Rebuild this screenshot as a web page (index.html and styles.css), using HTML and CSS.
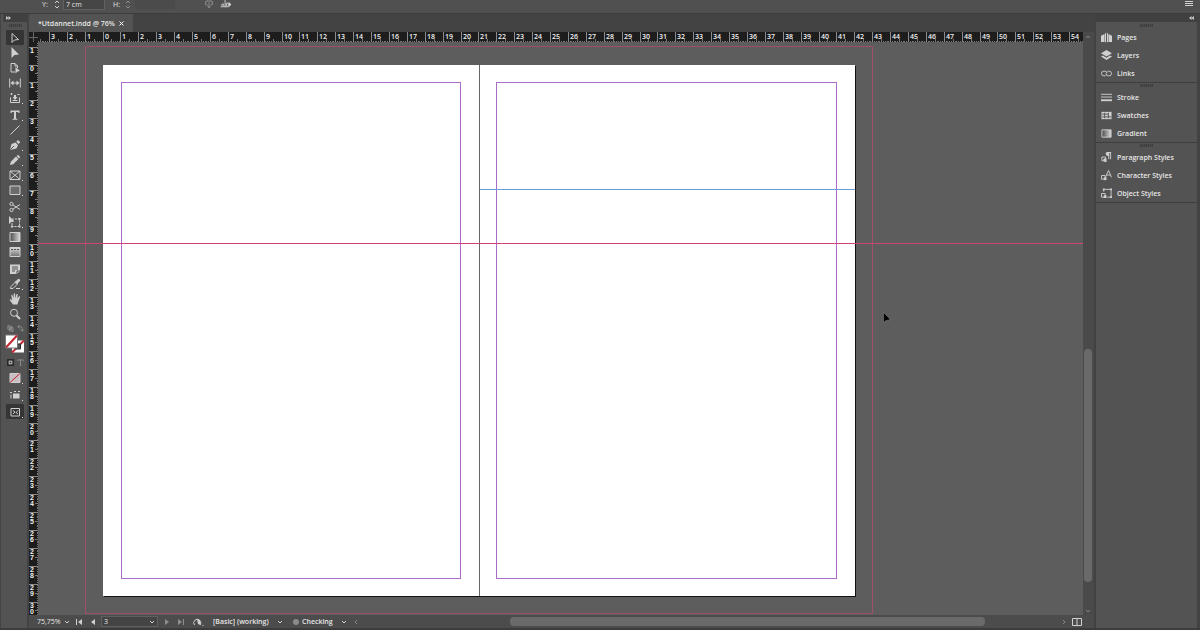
FILE: index.html
```html
<!DOCTYPE html>
<html lang="en">

<head>
    <meta charset="UTF-8">
    <meta name="viewport" content="width=device-width, initial-scale=1.0">
    <title>Utdannet.indd</title>
    <link rel="stylesheet" href="styles.css">
</head>

<body>

    <!-- Control bar -->
    <div class="control-bar">
        <div class="field field-y">
            <label for="posY">Y:</label>
            <svg class="spin" viewBox="0 0 8 9"><path d="M2 3l2-2 2 2M2 6l2 2 2-2" /></svg>
            <input type="text" id="posY" value="7 cm">
        </div>
        <div class="field field-h">
            <label for="sizeH">H:</label>
            <svg class="spin off" viewBox="0 0 8 9"><path d="M2 3l2-2 2 2M2 6l2 2 2-2" /></svg>
            <input type="text" id="sizeH" disabled>
        </div>
        <div class="control-icons">
            <button type="button" class="icon-button off" aria-label="Flip vertical">
                <svg viewBox="0 0 12 10"><path d="M4 0v2H2v3h2M8 0v2h2v3H8M6 0v8M4 6l2 3 2-3" /></svg>
            </button>
            <button type="button" class="icon-button" aria-label="Distribute">
                <svg viewBox="0 0 12 10"><path d="M1.500 7V4.500h2V7M5 0v8M6.500 7V3.500h2V7M0 7.500h9" /><path class="solid" d="M9 2l3 3-3 3z" /></svg>
            </button>
        </div>
        <button type="button" class="icon-button bar-menu" aria-label="Menu">
            <svg viewBox="0 0 8 8"><path d="M0 1.500h8M0 3.500h8M0 5.500h8" /></svg>
        </button>
    </div>

    <div class="workspace">

        <!-- Tools panel -->
        <div class="tools">
            <div class="panel-head">
                <svg class="arrows" viewBox="0 0 6 5"><path d="M0 0l3 2.500-3 2.500zM3 0l3 2.500-3 2.500z" /></svg>
            </div>
            <div class="grip"></div>
            <div class="tool-group">
                <button type="button" class="tool active" aria-label="Selection"><svg viewBox="0 0 12 12"><path d="M3 1.500v9l2.500-2.500 4-.500z" /></svg></button>
                <button type="button" class="tool" aria-label="Direct selection"><svg viewBox="0 0 12 12"><path class="solid" d="M2.500 0v11l3-3 4.500-.500z" /></svg></button>
                <button type="button" class="tool" aria-label="Page"><svg viewBox="0 0 12 12"><path d="M6 10H2V1.500h4l2.500 2.500v2M6 1.500V4h2.500" /><path class="solid" d="M6.500 5v6.500l2-2 2.500-.500z" /></svg></button>
                <button type="button" class="tool" aria-label="Gap"><svg viewBox="0 0 12 12"><path d="M.700 1.500v9M11.300 1.500v9M3 6h6" /><path class="solid" d="M1.500 6l3-2.500v5zM10.500 6l-3-2.500v5z" /></svg></button>
                <button type="button" class="tool more" aria-label="Content collector"><svg viewBox="0 0 12 12"><path d="M1.500 5.500v5h9v-5M3.500 8.500h5M2.500 1v2M1.500 2h2M8.500 2.500h2" /><path class="solid" d="M5 3h2v2h1.500L6 8 3.500 5H5z" /></svg></button>
            </div>
            <div class="tool-group">
                <button type="button" class="tool more" aria-label="Type"><svg viewBox="0 0 12 12"><path class="solid" d="M1.500 1.500h9V4h-1l-.500-1H7v6.500l1.500.500v.700h-5V10L5 9.500V3H3l-.500 1h-1z" /></svg></button>
                <button type="button" class="tool" aria-label="Line"><svg viewBox="0 0 12 12"><path d="M1.500 10.500l9-9" /></svg></button>
                <button type="button" class="tool more" aria-label="Pen"><svg viewBox="0 0 12 12"><path class="solid" d="M1 11l1.500-6 4-1.500L9 6l-1.500 3.500zM7.300 2.800L9 1l2.300 2.200L9.500 5z" /><path class="cut" d="M1.500 10.500L5 7" /></svg></button>
                <button type="button" class="tool more" aria-label="Pencil"><svg viewBox="0 0 12 12"><path class="solid" d="M1 11l.800-3.200L7 2.500 9.500 5l-5.300 5.200zM7.600 2L9 .800 11.200 3 10 4.400z" /></svg></button>
                <button type="button" class="tool more" aria-label="Rectangle frame"><svg viewBox="0 0 12 12"><path d="M1 2h10v8.500H1zM1 2l10 8.500M11 2L1 10.500" /></svg></button>
                <button type="button" class="tool more" aria-label="Rectangle"><svg viewBox="0 0 12 12"><path class="shade" d="M1 2h10v8.500H1z" /></svg></button>
            </div>
            <div class="tool-group">
                <button type="button" class="tool" aria-label="Scissors"><svg viewBox="0 0 12 12"><circle cx="2.500" cy="3" r="1.600" /><circle cx="2.500" cy="9" r="1.600" /><path d="M4 4l7 4.500M4 8l7-4.500" /></svg></button>
                <button type="button" class="tool more" aria-label="Free transform"><svg viewBox="0 0 12 12"><path class="dash" d="M3 3h7.500v7.500H3z" /><path class="solid" d="M0 0v8l2.200-2L5.500 5.500zM9.500 2h2v2h-2zM9.500 9.500h2v2h-2zM2 9.500h2v2H2z" /></svg></button>
                <button type="button" class="tool" aria-label="Gradient swatch"><svg viewBox="0 0 12 12"><path class="fade-across" d="M1 1.500h10v9H1z" /></svg></button>
                <button type="button" class="tool" aria-label="Gradient feather"><svg viewBox="0 0 12 12"><path class="fade-down" d="M1 1.500h10v9H1z" /><path class="cut" d="M2 3.500h2M5 3.500h2M8 3.500h2" /></svg></button>
            </div>
            <div class="tool-group">
                <button type="button" class="tool" aria-label="Note"><svg viewBox="0 0 12 12"><path class="solid" d="M1 1.500h10V8l-3 3H1z" /><path class="cut" d="M3 4h6M3 6h6M3 8h3M8 11V8h3" /></svg></button>
                <button type="button" class="tool more" aria-label="Eyedropper"><svg viewBox="0 0 12 12"><path d="M1.500 10.500L2 8.500l4-4L8 6.500l-4 4zM7 10.500h4" /><path class="solid" d="M5.500 3.500L7 3l2-2c1-.800 2.800.800 2 2L9 5l-.500 1.800z" /></svg></button>
                <button type="button" class="tool" aria-label="Hand"><svg viewBox="0 0 12 12"><path class="solid" d="M4 11.500L1 7.500C.200 6.200 1.500 5.800 2.200 6.500L3.300 7.500 2.200 2.600c0-.900 1-1.100 1.300-.200L4.500 5.300 4.700 1c.100-.900 1.300-.900 1.400 0l.200 4.200L7.400 1.600c.300-.900 1.500-.500 1.300.300L8.200 5.800 9.800 3.500c.600-.700 1.500-.100 1.200.700L9 9.500l-.500 2z" /></svg></button>
                <button type="button" class="tool" aria-label="Zoom"><svg viewBox="0 0 12 12"><circle cx="5" cy="4.800" r="3.500" /><path class="thick" d="M7.500 7.500l3.500 3.500" /></svg></button>
            </div>
            <div class="mini-row">
                <button type="button" class="mini off" aria-label="Default fill and stroke"><svg viewBox="0 0 8 8"><path d="M1 1h4v4H1zM3 3h4v4H3zM1 1l6 6" /></svg></button>
                <button type="button" class="mini off" aria-label="Swap fill and stroke"><svg viewBox="0 0 8 8"><path d="M3 0L1 2l2 2M1 2h3q2 0 2 2v3M4 5l2 2 2-2" /></svg></button>
            </div>
            <button type="button" class="fill-stroke" aria-label="Fill and stroke">
                <svg viewBox="0 0 20 19">
                    <path class="white" d="M7 6h12v12H7z" />
                    <path class="red" d="M7 18L19 6" />
                    <path class="hole" d="M10.500 9.500h5v5h-5z" />
                    <path class="white edge" d="M.500.500h12v13H.500z" />
                    <path class="red" d="M1 13L12 1" />
                </svg>
            </button>
            <div class="tool-modes">
                <div class="mini-row">
                    <button type="button" class="mini" aria-label="Formatting affects container"><svg viewBox="0 0 8 8"><path class="box" d="M.500.500h7v7h-7z" /><path d="M2.500 2.500h3v3h-3z" /></svg></button>
                    <button type="button" class="mini off" aria-label="Formatting affects text"><svg viewBox="0 0 8 8"><path d="M1 2.500V1h6v1.500M4 1v6M3 7h2" /></svg></button>
                </div>
                <button type="button" class="tool more" aria-label="Apply none"><svg viewBox="0 0 12 12"><path class="pale" d="M1 1.500h10v9H1z" /><path class="red thin" d="M1 10.500l10-9" /></svg></button>
                <button type="button" class="tool more" aria-label="View options"><svg viewBox="0 0 12 12"><path class="solid" d="M4 4.500h6.500v5H4z" /><path d="M1 3.500h2M5 2.500h2M9 2.500h2M2 5.500v4" /></svg></button>
                <button type="button" class="tool more active" aria-label="Screen mode"><svg viewBox="0 0 12 12"><path d="M2 2.500h8.500v7.500H2zM4 4.500l2 1.500-2 2M9 4.500L7 6.500l2 1.500" /></svg></button>
            </div>
        </div>

        <!-- Document window -->
        <div class="document">
            <div class="tab-bar">
                <button type="button" class="tab">*Utdannet.indd @ 76%
                    <svg viewBox="0 0 5 5"><path d="M.500.500l4 4M4.500.500l-4 4" /></svg>
                </button>
            </div>

            <div class="view">
                <div class="ruler-corner"></div>
                <svg class="ruler ruler-top" id="rulerTop"></svg>
                <svg class="ruler ruler-left" id="rulerLeft"></svg>

                <div class="canvas">
                    <div class="spread">
                        <div class="page page-left"><div class="margin-box"></div></div>
                        <div class="page page-right">
                            <div class="margin-box"></div>
                            <div class="page-guide"></div>
                        </div>
                    </div>
                    <div class="bleed"></div>
                    <div class="spread-guide"></div>
                    <svg class="pointer" viewBox="0 0 8 12"><path d="M.500.500v10L3 8.500l4.500-1z" /></svg>
                </div>

                <div class="scroll-y">
                    <svg class="chevron" viewBox="0 0 6 4"><path d="M1 3l2-2 2 2" /></svg>
                    <div class="track"><div class="thumb"></div></div>
                    <svg class="chevron" viewBox="0 0 6 4"><path d="M1 1l2 2 2-2" /></svg>
                </div>
            </div>

            <!-- Status bar -->
            <div class="status-bar">
                <div class="pick pick-zoom">
                    <select aria-label="Zoom level"><option>75,75%</option></select>
                    <svg class="chevron" viewBox="0 0 6 4"><path d="M1 1l2 2 2-2" /></svg>
                </div>
                <button type="button" class="step" aria-label="First page"><svg viewBox="0 0 6 6"><path class="solid" d="M0 0h1v6H0zM6 0v6L2 3z" /></svg></button>
                <button type="button" class="step" aria-label="Previous page"><svg viewBox="0 0 6 6"><path class="solid" d="M5 0v6L1 3z" /></svg></button>
                <div class="pick pick-page">
                    <select aria-label="Page"><option>3</option></select>
                    <svg class="chevron" viewBox="0 0 6 4"><path d="M1 1l2 2 2-2" /></svg>
                </div>
                <button type="button" class="step off" aria-label="Next page"><svg viewBox="0 0 6 6"><path class="solid" d="M1 0v6l4-3z" /></svg></button>
                <button type="button" class="step off" aria-label="Last page"><svg viewBox="0 0 6 6"><path class="solid" d="M0 0v6l4-3zM5 0h1v6H5z" /></svg></button>
                <button type="button" class="preflight" aria-label="Preflight menu"><svg viewBox="0 0 12 10"><path d="M2.500 8A3.500 3.500 0 1 1 8 8" /><path class="solid" d="M5 2l3 1 1 5-3-1zM10.500 8h1v1h-1z" /></svg></button>
                <div class="pick pick-profile">
                    <select aria-label="Preflight profile"><option>[Basic] (working)</option></select>
                    <svg class="chevron" viewBox="0 0 6 4"><path d="M1 1l2 2 2-2" /></svg>
                </div>
                <span class="dot"></span>
                <div class="pick pick-check">
                    <select aria-label="Preflight status"><option>Checking</option></select>
                    <svg class="chevron" viewBox="0 0 6 4"><path d="M1 1l2 2 2-2" /></svg>
                </div>
                <div class="scroll-x">
                    <svg class="chevron side" viewBox="0 0 4 6"><path d="M3 1L1 3l2 2" /></svg>
                    <div class="track"><div class="thumb"></div></div>
                    <svg class="chevron side" viewBox="0 0 4 6"><path d="M1 1l2 2-2 2" /></svg>
                </div>
                <button type="button" class="split" aria-label="Split layout"><svg viewBox="0 0 10 8"><path d="M.500.500h9v7h-9zM5 .500v7" /></svg></button>
            </div>
        </div>

        <!-- Panel dock -->
        <div class="dock">
            <div class="panel-head head-right">
                <svg class="arrows" viewBox="0 0 6 5"><path d="M3 0L0 2.500 3 5zM6 0L3 2.500 6 5z" /></svg>
            </div>
            <div class="dock-body">
                <div class="dock-group">
                    <div class="grip"></div>
                    <button type="button" class="dock-item"><svg viewBox="0 0 12 12"><path class="solid" d="M0 4l3.500-1.500V11H0zM4 2.500L5.500.500v11L4 10.500zM6.500.500L8 2.500v8l-1.500 1zM8.500 2.500L12 4v7H8.500z" /></svg>Pages</button>
                    <button type="button" class="dock-item"><svg viewBox="0 0 12 12"><path class="solid" d="M6 0l6 3.500L6 7 0 3.500zM0 7l2-1 4 2.500L10 6l2 1-6 4z" /></svg>Layers</button>
                    <button type="button" class="dock-item"><svg viewBox="0 0 12 12"><path d="M5 8.500H3a2.500 2.500 0 0 1 0-5h1.500q2 0 2 2.500M7 3.500h2a2.500 2.500 0 0 1 0 5H7.500q-2 0-2-2.500" /></svg>Links</button>
                </div>
                <div class="dock-group">
                    <div class="grip"></div>
                    <button type="button" class="dock-item"><svg viewBox="0 0 12 12"><path d="M0 2.500h12M0 5.500h12" /><path class="thick" d="M0 9h12" /></svg>Stroke</button>
                    <button type="button" class="dock-item"><svg viewBox="0 0 12 12"><path class="solid" d="M.500 2h11v8H.500z" /><path class="cut" d="M1 4.500h7M1 7.500h10M4 3v6M8 3v6" /></svg>Swatches</button>
                    <button type="button" class="dock-item"><svg viewBox="0 0 12 12"><path class="fade-across" d="M1 2h10v8H1z" /></svg>Gradient</button>
                </div>
                <div class="dock-group">
                    <div class="grip"></div>
                    <button type="button" class="dock-item"><svg viewBox="0 0 12 12"><path d="M1 5.500h4v4H1zM3 8l3 3" /><path class="solid" d="M7 0h4v8h-1V1H9v7H8V4.500Q5 4 5 2t2-2zM3 7h3v3.500H3z" /></svg>Paragraph Styles</button>
                    <button type="button" class="dock-item"><svg viewBox="0 0 12 12"><path d="M.500 6h4v4h-4zM5 7.500L8.200.500 11.500 8M6 5.500h4.500" /><path class="solid" d="M3 8h3v3H3z" /></svg>Character Styles</button>
                    <button type="button" class="dock-item"><svg viewBox="0 0 12 12"><path d="M3 4V1.500h8V10H7M.500 6h4v4h-4z" /><path class="solid" d="M3 8h3v3H3zM2 .500h2v2H2zM10 .500h2v2h-2zM10 9h2v2h-2z" /></svg>Object Styles</button>
                </div>
            </div>
        </div>
    </div>

    <!-- Gradients used by the swatch icons -->
    <svg class="defs" aria-hidden="true">
        <linearGradient id="across"><stop offset="0" stop-color="#4a4a4a" /><stop offset="1" stop-color="#dadada" /></linearGradient>
        <linearGradient id="down" x2="0" y2="1"><stop offset="0" stop-color="#dadada" /><stop offset="1" stop-color="#707070" /></linearGradient>
    </svg>

    <script>
        const CM = 17.9; // one centimetre at the current zoom

        function add(parent, name, attrs, text) {
            const el = document.createElementNS('http://www.w3.org/2000/svg', name);
            for (const key in attrs) {
                el.setAttribute(key, attrs[key]);
            }
            if (text !== undefined) {
                el.textContent = text;
            }
            parent.appendChild(el);
        }

        function drawRuler(id, zero, from, to, vertical) {
            const ruler = document.getElementById(id);
            let major = '';
            let minor = '';
            // start one step early so the ticks fill the edge
            for (let n = from - 1; n <= to; n++) {
                const at = Math.floor(zero + n * CM);
                major += vertical ? `M0 ${at + 0.5}h9` : `M${at + 0.5} 0v10`;
                for (let i = 1; i < 10; i++) {
                    const p = Math.floor(zero + (n + i / 10) * CM) + 0.5;
                    const len = i === 5 ? 3 : 1;
                    minor += vertical ? `M${9 - len} ${p}h${len}` : `M${p} ${10 - len}v${len}`;
                }
                if (n < from) {
                    continue;
                }
                const label = String(Math.abs(n));
                if (vertical) {
                    label.split('').forEach((digit, i) => {
                        add(ruler, 'text', { x: 1, y: at + 6 + i * 6 }, digit);
                    });
                } else {
                    add(ruler, 'text', { x: at + 2, y: 7 }, label);
                }
            }
            add(ruler, 'path', { d: minor, class: 'minor' });
            add(ruler, 'path', { d: major, class: 'major' });
        }

        drawRuler('rulerTop', 65, -3, 54, false);
        drawRuler('rulerLeft', 23, -1, 30, true);
    </script>

</body>

</html>
```
FILE: styles.css
```css
* {
    box-sizing: border-box;
}

body {
    margin: 0;
    height: 100vh;
    display: flex;
    flex-direction: column;
    overflow: hidden;
    background-color: #434343;
    color: #e6e6e6;
    font-family: "Open Sans", "Noto Sans", sans-serif;
    font-size: 7px;
    line-height: 9px;
}

button,
input,
select {
    margin: 0;
    padding: 0;
    border: none;
    background: none;
    color: inherit;
    font: inherit;
}

svg {
    display: block;
    fill: none;
    stroke: #d0d0d0;
    stroke-width: 1;
}

.solid {
    fill: #d0d0d0;
    stroke: none;
}

.cut {
    stroke: #505050;
}

.thick {
    stroke-width: 2;
}

.shade {
    fill: #6c6c6c;
}

.dash {
    stroke-dasharray: 2 1;
}

.fade-across {
    fill: url(#across);
}

.fade-down {
    fill: url(#down);
}

.white {
    fill: #fff;
    stroke: none;
}

.edge {
    stroke: #777;
}

.red {
    stroke: #c22630;
    stroke-width: 2;
}

.red.thin {
    stroke-width: 1;
}

.hole {
    fill: #535353;
    stroke: #333;
}

.pale {
    fill: #c9bfc3;
}

.box {
    stroke: #222;
    fill: #3a3a3a;
}

.off {
    opacity: 0.5;
}

.defs {
    position: absolute;
    width: 0;
    height: 0;
}

/* Control bar */
.control-bar {
    display: flex;
    align-items: flex-start;
    height: 14px;
    padding: 0 7px 0 42px;
    background-color: #505050;
    border-bottom: 1px solid #3c3c3c;
}

.field {
    display: flex;
    gap: 2px;
}

.field label {
    width: 9px;
    height: 9px;
}

.field input {
    width: 42px;
    height: 10px;
    padding-left: 2px;
    background-color: #464646;
    border: 1px solid #616161;
    border-top: none;
}

.field-h {
    margin-left: 8px;
}

.field-h input {
    background-color: #4b4b4b;
    border-color: #4f4f4f;
}

.spin {
    width: 8px;
    height: 9px;
}

.control-icons {
    display: flex;
    gap: 5px;
    margin-left: 27px;
}

.icon-button svg {
    width: 12px;
    height: 9px;
}

.bar-menu {
    margin-left: auto;
}

.bar-menu svg {
    width: 8px;
    height: 8px;
}

/* Main area */
.workspace {
    flex: 1;
    display: flex;
    min-height: 0;
    border-bottom: 2px solid #3c3c3c;
}

.panel-head {
    height: 8px;
    padding: 2px 3px;
    background-color: #404040;
}

.arrows {
    width: 5px;
    height: 4px;
    fill: #d0d0d0;
    stroke: none;
}

.head-right .arrows {
    margin-left: auto;
}

.grip {
    width: 13px;
    height: 3px;
    margin: 0 auto;
    background: repeating-linear-gradient(90deg, #3f3f3f 0 1px, #4a4a4a 1px 2px);
}

/* Tools panel */
.tools {
    width: 27px;
    margin-right: 2px;
    padding-left: 2px;
    background-color: #535353;
    border-left: 1px solid #444;
    display: flex;
    flex-direction: column;
}

.tools .grip {
    margin: 2px auto 3px;
}

.tool-group {
    margin-bottom: 2px;
}

.tool {
    display: flex;
    align-items: center;
    justify-content: center;
    position: relative;
    width: 18px;
    height: 15px;
    margin: 0 auto;
    border-radius: 1px;
}

.tool svg {
    width: 12px;
    height: 12px;
}

.tool.active {
    background-color: #353535;
}

.more::after {
    content: "";
    position: absolute;
    right: 1px;
    bottom: 1px;
    width: 1px;
    height: 1px;
    background-color: #ddd;
}

.mini-row {
    display: flex;
    justify-content: center;
    gap: 3px;
    padding: 2px 0;
}

.mini svg {
    width: 7px;
    height: 7px;
}

.fill-stroke {
    margin: 0 auto;
}

.fill-stroke svg {
    width: 20px;
    height: 20px;
}

.tool-modes {
    display: flex;
    flex-direction: column;
    gap: 2px;
    margin-top: 3px;
}

/* Document window */
.document {
    flex: 1;
    min-width: 0;
    display: flex;
    flex-direction: column;
}

.tab-bar {
    height: 18px;
    background-color: #434343;
}

.tab {
    display: flex;
    align-items: center;
    gap: 4px;
    height: 18px;
    padding: 0 9px;
    background-color: #535353;
    font-weight: 600;
}

.tab svg {
    width: 5px;
    height: 5px;
    stroke: #fff;
}

.view {
    flex: 1;
    min-height: 0;
    display: grid;
    grid-template-columns: 9px 1fr 11px;
    grid-template-rows: 10px 1fr;
}

.ruler-corner {
    background: linear-gradient(#666, #666) 4px 0 / 1px 100% no-repeat,
        linear-gradient(#666, #666) 0 5px / 100% 1px no-repeat #1d1d1d;
}

.ruler {
    width: 100%;
    height: 100%;
    background-color: #1d1d1d;
    overflow: hidden;
}

.ruler text {
    fill: #f0f0f0;
    stroke: none;
    font-size: 7px;
    font-weight: 600;
}

.ruler-left text {
    font-family: "Liberation Sans", sans-serif;
    font-weight: 700;
}

.major {
    stroke: #8a8a8a;
}

.minor {
    stroke: #777;
}

.ruler-left {
    grid-area: 2 / 1;
    min-height: 0;
}

.canvas {
    grid-area: 2 / 2;
    position: relative;
    overflow: hidden;
    background-color: #5d5d5d;
}

/* The spread and its guides sit on the free pasteboard */
.spread {
    position: absolute;
    left: 65px;
    top: 23px;
    display: flex;
    box-shadow: 1px 1px 0 #111;
}

.page {
    position: relative;
    width: 376px;
    height: 531px;
    padding: 17px 18px;
    background-color: #fff;
}

.page-right {
    padding-left: 16px;
    border-left: 1px solid #666;
}

.margin-box {
    height: 497px;
    border: 1px solid #ab6cc8;
}

.page-guide {
    position: absolute;
    left: 0;
    right: 0;
    top: 124px;
    height: 1px;
    background-color: #6a9bdb;
}

.bleed {
    position: absolute;
    left: 47px;
    top: 4px;
    width: 788px;
    height: 568px;
    border: 1px solid #a04f68;
}

.spread-guide {
    position: absolute;
    left: 0;
    right: 0;
    top: 201px;
    height: 1px;
    background-color: #cc4673;
}

.pointer {
    position: absolute;
    left: 845px;
    top: 270px;
    width: 8px;
    height: 12px;
    fill: #000;
    stroke: #888;
    stroke-width: 0.5;
}

.chevron {
    width: 6px;
    height: 4px;
    flex: none;
}

.chevron.side {
    width: 4px;
    height: 6px;
}

.scroll-y {
    grid-area: 1 / 3 / 3 / 4;
    display: flex;
    flex-direction: column;
    align-items: center;
    padding: 3px 1px 2px 0;
    background-color: #4a4a4a;
}

.track {
    flex: 1;
    min-width: 0;
}

.thumb {
    background-color: #6a6a6a;
    border-radius: 4px;
}

.scroll-y .track {
    width: 8px;
    display: flex;
    flex-direction: column;
    justify-content: flex-end;
    padding-bottom: 27px;
}

.scroll-y .thumb {
    height: 43%;
}

.scroll-y .chevron,
.scroll-x .chevron {
    stroke: #858585;
}

/* Status bar */
.status-bar {
    display: flex;
    align-items: center;
    height: 13px;
    padding-left: 8px;
    background-color: #4c4c4c;
}

.pick {
    position: relative;
    display: flex;
    align-items: center;
}

.pick select {
    appearance: none;
    width: 100%;
    height: 10px;
}

.pick .chevron {
    position: absolute;
    right: 2px;
    pointer-events: none;
}

.pick-zoom {
    width: 35px;
}

.step {
    width: 14px;
    height: 10px;
    display: flex;
    justify-content: center;
    align-items: center;
}

.step svg {
    width: 6px;
    height: 6px;
}

.pick-page {
    width: 57px;
    margin: 0 2px 0 1px;
    background-color: #444;
    border: 1px solid #606060;
}

.pick-page select {
    height: 9px;
    padding-left: 2px;
}

.preflight {
    margin: 0 9px 0 4px;
}

.preflight svg {
    width: 12px;
    height: 10px;
}

.pick-profile {
    width: 72px;
    font-weight: 600;
}

.dot {
    width: 6px;
    height: 6px;
    margin: 0 3px 0 8px;
    border-radius: 50%;
    background-color: #8b8b8b;
}

.pick-check {
    width: 47px;
    font-weight: 600;
}

.scroll-x {
    flex: 1;
    display: flex;
    align-items: center;
    height: 10px;
    margin-left: 3px;
    padding: 0 4px 0 2px;
}

.scroll-x .track {
    padding-left: 152px;
}

.scroll-x .thumb {
    width: 86%;
    height: 9px;
}

.split {
    margin: 0 12px 0 2px;
}

.split svg {
    width: 10px;
    height: 8px;
}

/* Panel dock */
.dock {
    width: 106px;
    padding: 0 3px 0 2px;
    background-color: #424242;
    display: flex;
    flex-direction: column;
}

.dock-body {
    flex: 1;
    padding-top: 1px;
    background-color: #535353;
}

.dock-group {
    border-bottom: 1px solid #3e3e3e;
}

.dock-group .grip {
    margin: 1px auto;
}

.dock-item {
    display: flex;
    align-items: center;
    gap: 5px;
    width: 100%;
    height: 18px;
    padding-left: 5px;
    font-weight: 600;
}

.dock-item svg {
    width: 11px;
    height: 11px;
}
```
